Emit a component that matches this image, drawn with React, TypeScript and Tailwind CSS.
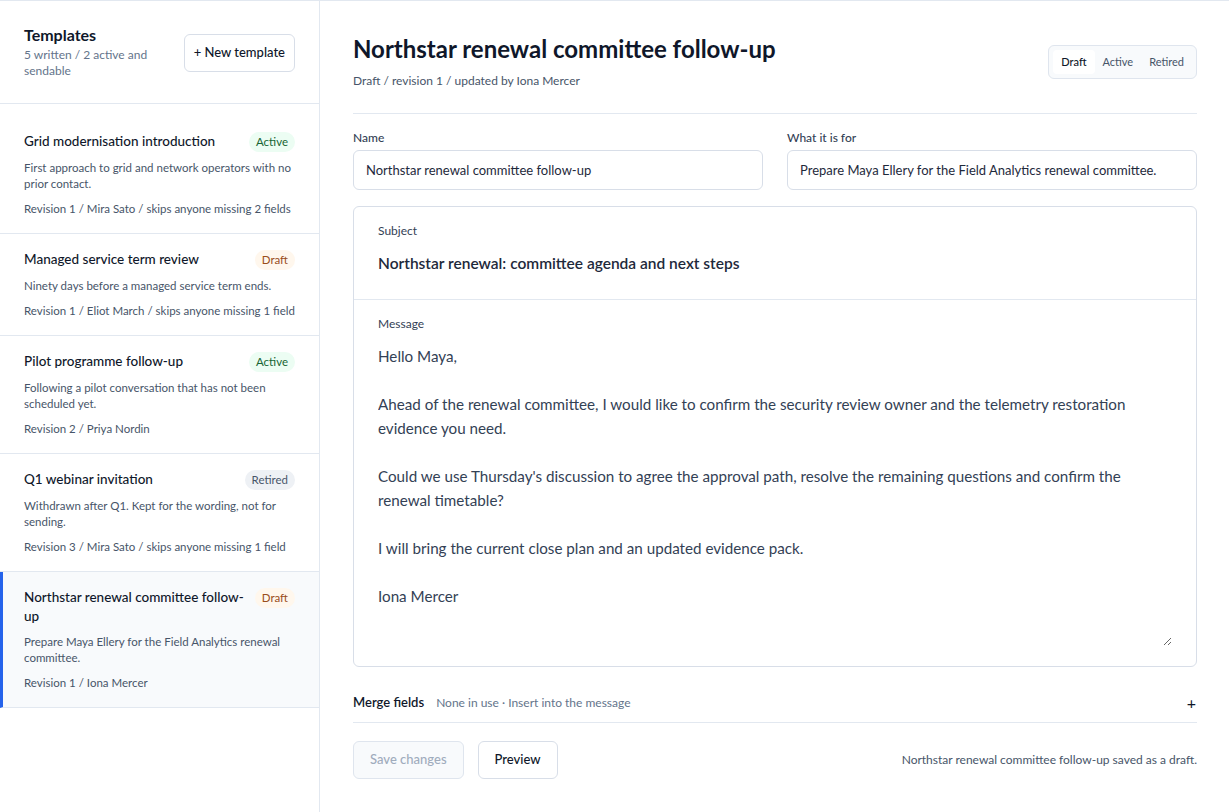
import React from "react";

type Template = {
  name: string;
  status: "Active" | "Draft" | "Retired";
  description: string;
  meta: string;
  selected?: boolean;
};

const templates: Template[] = [
  {
    name: "Grid modernisation introduction",
    status: "Active",
    description: "First approach to grid and network operators with no prior contact.",
    meta: "Revision 1 / Mira Sato / skips anyone missing 2 fields",
  },
  {
    name: "Managed service term review",
    status: "Draft",
    description: "Ninety days before a managed service term ends.",
    meta: "Revision 1 / Eliot March / skips anyone missing 1 field",
  },
  {
    name: "Pilot programme follow-up",
    status: "Active",
    description: "Following a pilot conversation that has not been scheduled yet.",
    meta: "Revision 2 / Priya Nordin",
  },
  {
    name: "Q1 webinar invitation",
    status: "Retired",
    description: "Withdrawn after Q1. Kept for the wording, not for sending.",
    meta: "Revision 3 / Mira Sato / skips anyone missing 1 field",
  },
  {
    name: "Northstar renewal committee follow-up",
    status: "Draft",
    description: "Prepare Maya Ellery for the Field Analytics renewal committee.",
    meta: "Revision 1 / Iona Mercer",
    selected: true,
  },
];

const message = `Hello Maya,

Ahead of the renewal committee, I would like to confirm the security review owner and the telemetry restoration evidence you need.

Could we use Thursday's discussion to agree the approval path, resolve the remaining questions and confirm the renewal timetable?

I will bring the current close plan and an updated evidence pack.

Iona Mercer`;

function StatusBadge({ status }: { status: Template["status"] }) {
  const colorClass =
    status === "Active"
      ? "bg-[#ecfdf3] text-[#166534]"
      : status === "Draft"
      ? "bg-[#fff7ed] text-[#9a4d1c]"
      : "bg-[#eef1f5] text-[#475569]";
  return (
    <span className={`shrink-0 inline-flex items-center h-5 px-[7px] rounded-full text-[11.5px] leading-4 ${colorClass}`}>
      {status}
    </span>
  );
}

function TemplateItem({ t }: { t: Template }) {
  return (
    <div
      className={`py-4 pr-6 border-b border-[#e2e8f0] ${
        t.selected ? "bg-[#f8fafc] border-l-[3px] border-l-[#2563eb] pl-[21px]" : "pl-6"
      }`}
    >
      <div className="flex items-start justify-between gap-1.5">
        <div className="min-w-0 text-[13.5px] leading-[19px] font-medium text-[#0f172a]">{t.name}</div>
        <StatusBadge status={t.status} />
      </div>
      <div className="mt-2 text-[11.5px] leading-4 text-[#475569]">{t.description}</div>
      <div className="mt-[9px] text-[11.5px] leading-4 text-[#475569]">{t.meta}</div>
    </div>
  );
}

export default function App() {
  return (
    <div
      className="flex min-h-screen h-[812px] border-t border-[#e2e8f0] bg-white text-[#0f172a]"
      style={{ fontFamily: "Lato, 'Noto Sans', sans-serif" }}
    >
      <aside className="w-[320px] shrink-0 border-r border-[#e2e8f0]">
        <div className="flex items-center justify-between gap-4 px-6 pt-[22px] pb-6 border-b border-[#e2e8f0]">
          <div>
            <h2 className="text-base leading-6 font-bold text-[#0f172a]">Templates</h2>
            <p className="text-xs leading-4 text-[#64748b] max-w-[140px]">5 written / 2 active and sendable</p>
          </div>
          <button className="mt-1 h-[38px] px-[9px] rounded-md border border-[#d8dee8] bg-white text-[13px] font-medium text-[#0f172a]">
            + New template
          </button>
        </div>
        <div className="pt-3">
          {templates.map((t) => (
            <TemplateItem key={t.name} t={t} />
          ))}
        </div>
      </aside>

      <main className="flex-1 pl-[33px] pr-8">
        <div className="flex items-start justify-between pt-8 pb-6 border-b border-[#e2e8f0]">
          <div>
            <h1 className="text-2xl leading-8 font-bold text-[#0f172a]">Northstar renewal committee follow-up</h1>
            <p className="mt-2 text-xs leading-4 text-[#475569]">Draft / revision 1 / updated by Iona Mercer</p>
          </div>
          <div className="mt-3 flex items-center p-1 rounded-md border border-[#dfe5ee] bg-[#f8fafc]">
            <button className="h-6 px-2 rounded bg-white text-[11px] font-medium text-[#0f172a]">Draft</button>
            <button className="h-6 px-2 rounded text-[11px] text-[#475569]">Active</button>
            <button className="h-6 px-2 rounded text-[11px] text-[#475569]">Retired</button>
          </div>
        </div>

        <div className="grid grid-cols-2 gap-6 pt-4">
          <label className="block">
            <span className="block text-xs leading-4 font-medium text-[#334155]">Name</span>
            <input
              readOnly
              value="Northstar renewal committee follow-up"
              className="mt-1 w-full h-10 px-3 rounded-md border border-[#d8dee8] text-[13px] text-[#1e293b] outline-none"
            />
          </label>
          <label className="block">
            <span className="block text-xs leading-4 font-medium text-[#334155]">What it is for</span>
            <input
              readOnly
              value="Prepare Maya Ellery for the Field Analytics renewal committee."
              className="mt-1 w-full h-10 px-3 rounded-md border border-[#d8dee8] text-[13px] text-[#1e293b] outline-none"
            />
          </label>
        </div>

        <div className="mt-4 rounded-md border border-[#d8dee8]">
          <div className="px-6 pt-4 pb-6 border-b border-[#e2e8f0]">
            <div className="text-xs leading-4 text-[#334155]">Subject</div>
            <div className="mt-3 text-[15.5px] leading-6 font-semibold text-[#1e293b]">
              Northstar renewal: committee agenda and next steps
            </div>
          </div>
          <div className="px-6 pt-4 pb-5">
            <div className="text-xs leading-4 text-[#334155]">Message</div>
            <textarea
              readOnly
              value={message}
              className="mt-3 block w-full h-[302px] resize-y bg-transparent text-[15.2px] leading-6 text-[#334155] outline-none"
            />
          </div>
        </div>

        <div className="mt-4 h-10 flex items-center justify-between border-b border-[#e2e8f0]">
          <div className="flex items-baseline gap-3">
            <span className="text-[13px] font-semibold text-[#0f172a]">Merge fields</span>
            <span className="text-xs text-[#64748b]">None in use · Insert into the message</span>
          </div>
          <span className="text-base leading-none text-[#0f172a] pr-px">+</span>
        </div>

        <div className="mt-[18px] flex items-center justify-between">
          <div className="flex items-center gap-3.5">
            <button
              disabled
              className="h-[38px] px-4 rounded-md border border-[#dfe5ee] bg-[#f8fafc] text-[13px] font-medium text-[#a0acbd]"
            >
              Save changes
            </button>
            <button className="h-[38px] px-4 rounded-md border border-[#d8dee8] bg-white text-[13px] font-medium text-[#0f172a]">
              Preview
            </button>
          </div>
          <span className="text-xs text-[#475569]">Northstar renewal committee follow-up saved as a draft.</span>
        </div>
      </main>
    </div>
  );
}
